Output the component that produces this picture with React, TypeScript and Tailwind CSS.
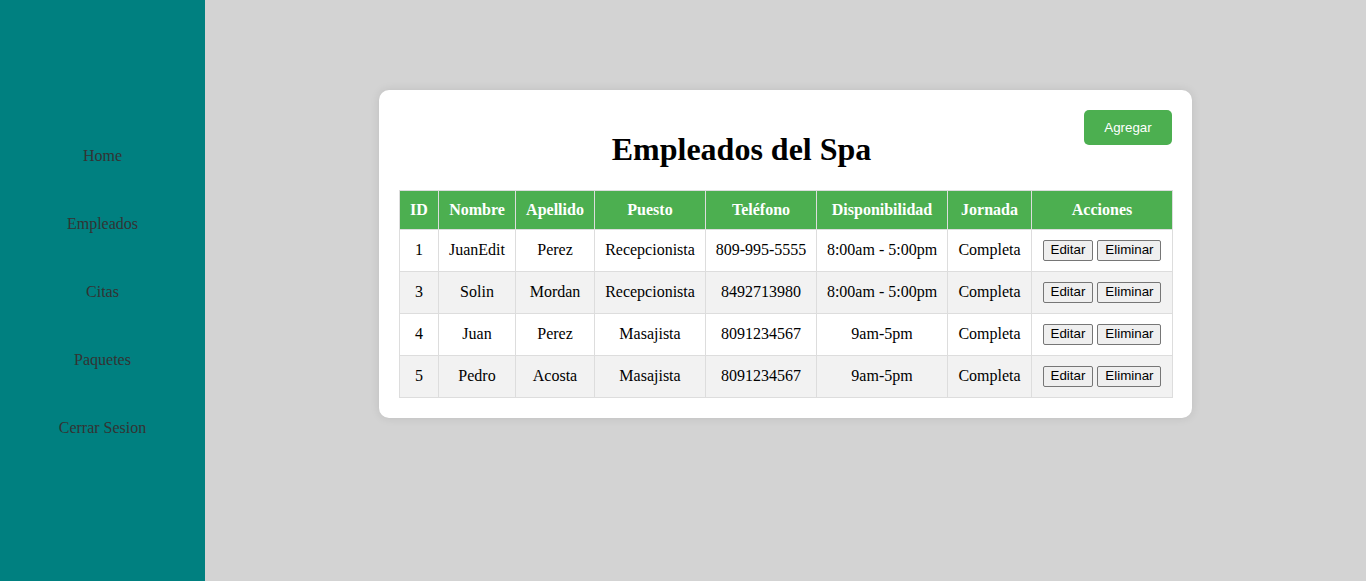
import React from "react";

const empleados = [
  { id: 1, nombre: "JuanEdit", apellido: "Perez", puesto: "Recepcionista", telefono: "809-995-5555", disp: "8:00am - 5:00pm", jornada: "Completa" },
  { id: 3, nombre: "Solin", apellido: "Mordan", puesto: "Recepcionista", telefono: "8492713980", disp: "8:00am - 5:00pm", jornada: "Completa" },
  { id: 4, nombre: "Juan", apellido: "Perez", puesto: "Masajista", telefono: "8091234567", disp: "9am-5pm", jornada: "Completa" },
  { id: 5, nombre: "Pedro", apellido: "Acosta", puesto: "Masajista", telefono: "8091234567", disp: "9am-5pm", jornada: "Completa" },
];

const links = ["Home", "Empleados", "Citas", "Paquetes", "Cerrar Sesion"];

const headers = [
  { label: "ID", w: "w-[39px]" },
  { label: "Nombre", w: "w-[77px]" },
  { label: "Apellido", w: "w-[79px]" },
  { label: "Puesto", w: "w-[111px]" },
  { label: "Teléfono", w: "w-[111px]" },
  { label: "Disponibilidad", w: "w-[131px]" },
  { label: "Jornada", w: "w-[84px]" },
  { label: "Acciones", w: "w-[141px]" },
];

const btn =
  "inline-flex items-center h-[21px] px-[7px] border border-[#767676] rounded-[2px] bg-[#efefef] text-black text-[13.333px] font-['Liberation_Sans',Arial,sans-serif] align-middle";

const App = () => {
  return (
    <div className="flex min-h-[581px] font-['Liberation_Serif','Times_New_Roman',serif] text-base">
      <aside className="w-[205px] shrink-0 bg-[#008080] pt-[122px]">
        {links.map((l) => (
          <div key={l} className="h-[68px] flex items-center justify-center text-[#333] text-[16px]">
            {l}
          </div>
        ))}
      </aside>

      <main className="flex-1 bg-[#d3d3d3] pt-[90px]">
        <div className="w-[813px] mx-auto bg-white rounded-[10px] shadow-[0_0_10px_rgba(0,0,0,0.1)] p-5">
          <div className="flex items-start">
            <h1 className="flex-1 text-center text-[32px] font-bold leading-[36.8px] my-[21.44px] text-black">
              Empleados del Spa
            </h1>
            <button className="h-[35px] w-[88px] rounded-[5px] bg-[#4CAF50] text-white text-[13.333px] font-['Liberation_Sans',Arial,sans-serif]">
              Agregar
            </button>
          </div>

          <table className="w-full border-collapse table-fixed">
            <thead>
              <tr className="h-[39px]">
                {headers.map((h) => (
                  <th
                    key={h.label}
                    className={`${h.w} bg-[#4CAF50] text-white font-bold border border-[#ddd] px-0 py-0 text-center`}
                  >
                    {h.label}
                  </th>
                ))}
              </tr>
            </thead>
            <tbody>
              {empleados.map((e, i) => (
                <tr key={e.id} className={`h-[42px] ${i % 2 === 1 ? "bg-[#f2f2f2]" : "bg-white"}`}>
                  <td className="border border-[#ddd] text-center">{e.id}</td>
                  <td className="border border-[#ddd] text-center">{e.nombre}</td>
                  <td className="border border-[#ddd] text-center">{e.apellido}</td>
                  <td className="border border-[#ddd] text-center">{e.puesto}</td>
                  <td className="border border-[#ddd] text-center">{e.telefono}</td>
                  <td className="border border-[#ddd] text-center">{e.disp}</td>
                  <td className="border border-[#ddd] text-center">{e.jornada}</td>
                  <td className="border border-[#ddd] text-center">
                    <div className="flex justify-center gap-1">
                      <button className={btn}>Editar</button>
                      <button className={btn}>Eliminar</button>
                    </div>
                  </td>
                </tr>
              ))}
            </tbody>
          </table>
        </div>
      </main>
    </div>
  );
};

export default App;
